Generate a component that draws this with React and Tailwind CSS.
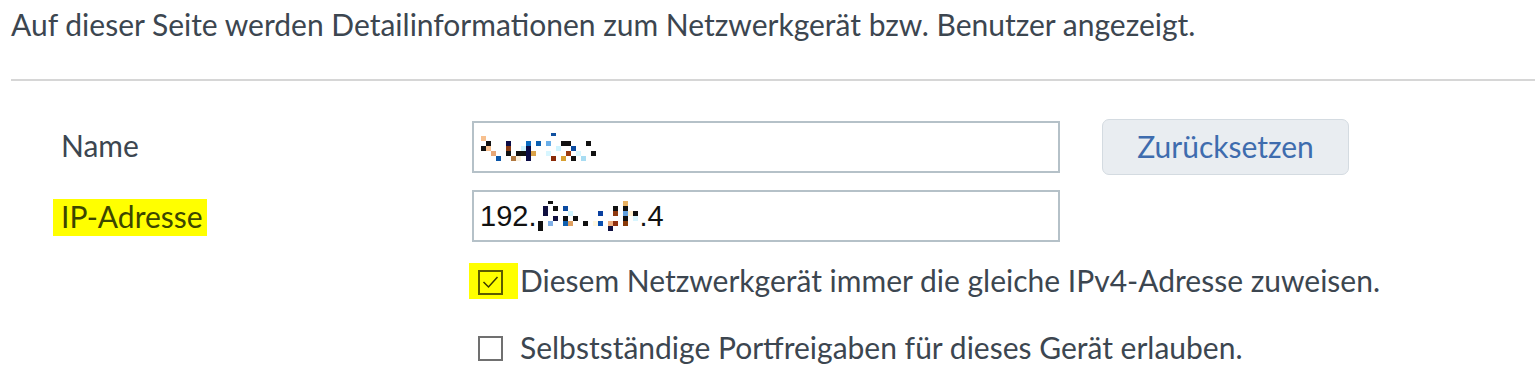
import React from "react";

const nameBlocks = [
  [1, 6, "#f7c08f"], [6, 11, "#111111"], [26, 11, "#0b0b45"], [46, 11, "#0a6ac0"], [56, 11, "#0b5fb0"],
  [66, 11, "#6aaee8"], [81, 11, "#111111"], [86, 11, "#111111"], [106, 11, "#111111"],
  [1, 16, "#111111"], [6, 16, "#f7c08f"], [26, 16, "#8a3b12"], [41, 16, "#cff4ff"], [46, 16, "#0b0b45"],
  [76, 16, "#cff4ff"], [91, 16, "#0a4aa0"],
  [11, 21, "#e8a878"], [26, 21, "#111111"], [36, 21, "#111111"], [41, 21, "#111111"], [46, 21, "#0b0b45"],
  [51, 21, "#daa24a"], [66, 21, "#d8f6ff"], [86, 21, "#9a3a10"], [96, 21, "#d8f6ff"], [111, 21, "#111111"],
  [16, 26, "#0a55a8"], [31, 26, "#b07840"], [36, 26, "#fdf0dc"], [46, 26, "#0b0b45"], [71, 26, "#8a2a08"],
  [81, 26, "#d8a030"], [91, 26, "#111111"], [101, 26, "#a8dcf2"], [71, 3, "#1050a0", 3],
];

const ipBlocks = [
  [2, 20, "#111111", 10], [7, 5, "#101040", 10], [12, 0, "#111111", 3], [17, 5, "#111111"], [27, 5, "#0a4aa0"],
  [32, 10, "#d0f4ff"], [17, 15, "#101040"], [27, 15, "#111111"], [37, 15, "#111111"], [12, 20, "#80b0e8"],
  [27, 20, "#1060b0"], [32, 20, "#e0a060"], [47, 20, "#111111"], [57, 20, "#fff8e0"], [62, 10, "#0a40a0"],
  [62, 20, "#0a50b0"], [72, 20, "#f0b080"], [77, 20, "#903010"], [72, 25, "#101040"], [77, 5, "#111111"],
  [77, 10, "#903a10"], [87, 0, "#e8b060"], [87, 5, "#111111"], [87, 10, "#60a0e0"], [87, 15, "#111111"],
  [87, 20, "#8a3a08"], [92, 10, "#fff0d0"], [97, 10, "#111111"], [97, 15, "#d8f6ff"],
];

function Pixels({ blocks, w, h }) {
  return (
    <svg width={w} height={h} viewBox={`0 0 ${w} ${h}`} shapeRendering="crispEdges">
      {blocks.map(([x, y, c, hh], i) => (
        <rect key={i} x={x} y={y} width="5" height={hh || 5} fill={c} />
      ))}
    </svg>
  );
}

export default function App() {
  return (
    <div className="w-[1535px] h-[384px] overflow-hidden bg-white text-[#3c4650] font-['Lato',sans-serif] text-[30px]">
      <p className="pl-[11px] pt-[6px] leading-[36px]">
        Auf dieser Seite werden Detailinformationen zum Netzwerkgerät bzw. Benutzer angezeigt.
      </p>
      <div className="ml-[11px] mt-[37px] h-[2px] bg-[#d6d6d6]" />

      <div className="mt-[38px] flex flex-col">
        {/* Name row */}
        <div className="flex items-center h-[56px]">
          <div className="w-[472px] pl-[61px] leading-[36px] pb-[4px]">Name</div>
          <div className="w-[588px] h-[52px] border-2 border-[#b5c1c8] flex items-center pl-[6px]">
            <Pixels blocks={nameBlocks} w={120} h={35} />
          </div>
          <button className="ml-[42px] w-[247px] h-[56px] rounded-[7px] bg-[#e9edf1] border border-[#d4dbe1] text-[#3e6cae] leading-[36px] pb-[3px]">
            Zurücksetzen
          </button>
        </div>

        {/* IP row */}
        <div className="flex items-start h-[52px] mt-[15px]">
          <div className="w-[472px] pl-[53px] pt-[4px]">
            <span className="inline-block bg-[#ffff00] text-[#3c4600] pl-[8px] pr-[4px] h-[37px] leading-[34px] pb-[3px]">
              IP-Adresse
            </span>
          </div>
          <div className="w-[588px] h-[52px] border-2 border-[#b5c1c8] flex items-center pl-[6px] font-['Liberation_Sans',sans-serif] text-[29px] text-[#111111]">
            <span className="leading-[30px]">192.</span>
            <Pixels blocks={ipBlocks} w={103} h={30} />
            <span className="leading-[30px]">.4</span>
          </div>
        </div>

        {/* Checkbox 1 */}
        <div className="flex items-center h-[36px] mt-[21px] pl-[469px]">
          <div className="w-[49px] h-[36px] bg-[#ffff00] pl-[9px] pt-[7px]">
            <div className="w-[25px] h-[25px] border-[2px] border-[#5c5c00]">
              <svg width="21" height="21" viewBox="0 0 21 21" className="block">
                <path d="M3.5 10 L8.5 15 L17.5 5" fill="none" stroke="#3a3a00" strokeWidth="1.5" />
              </svg>
            </div>
          </div>
          <span className="ml-[2px] leading-[36px] pb-[3px]">Diesem Netzwerkgerät immer die gleiche IPv4-Adresse zuweisen.</span>
        </div>

        {/* Checkbox 2 */}
        <div className="flex items-center h-[36px] mt-[31px] pl-[478px]">
          <div className="w-[25px] h-[25px] border-[2px] border-[#707070]" />
          <span className="ml-[17px] leading-[36px] pb-[3px]">Selbstständige Portfreigaben für dieses Gerät erlauben.</span>
        </div>
      </div>
    </div>
  );
}
